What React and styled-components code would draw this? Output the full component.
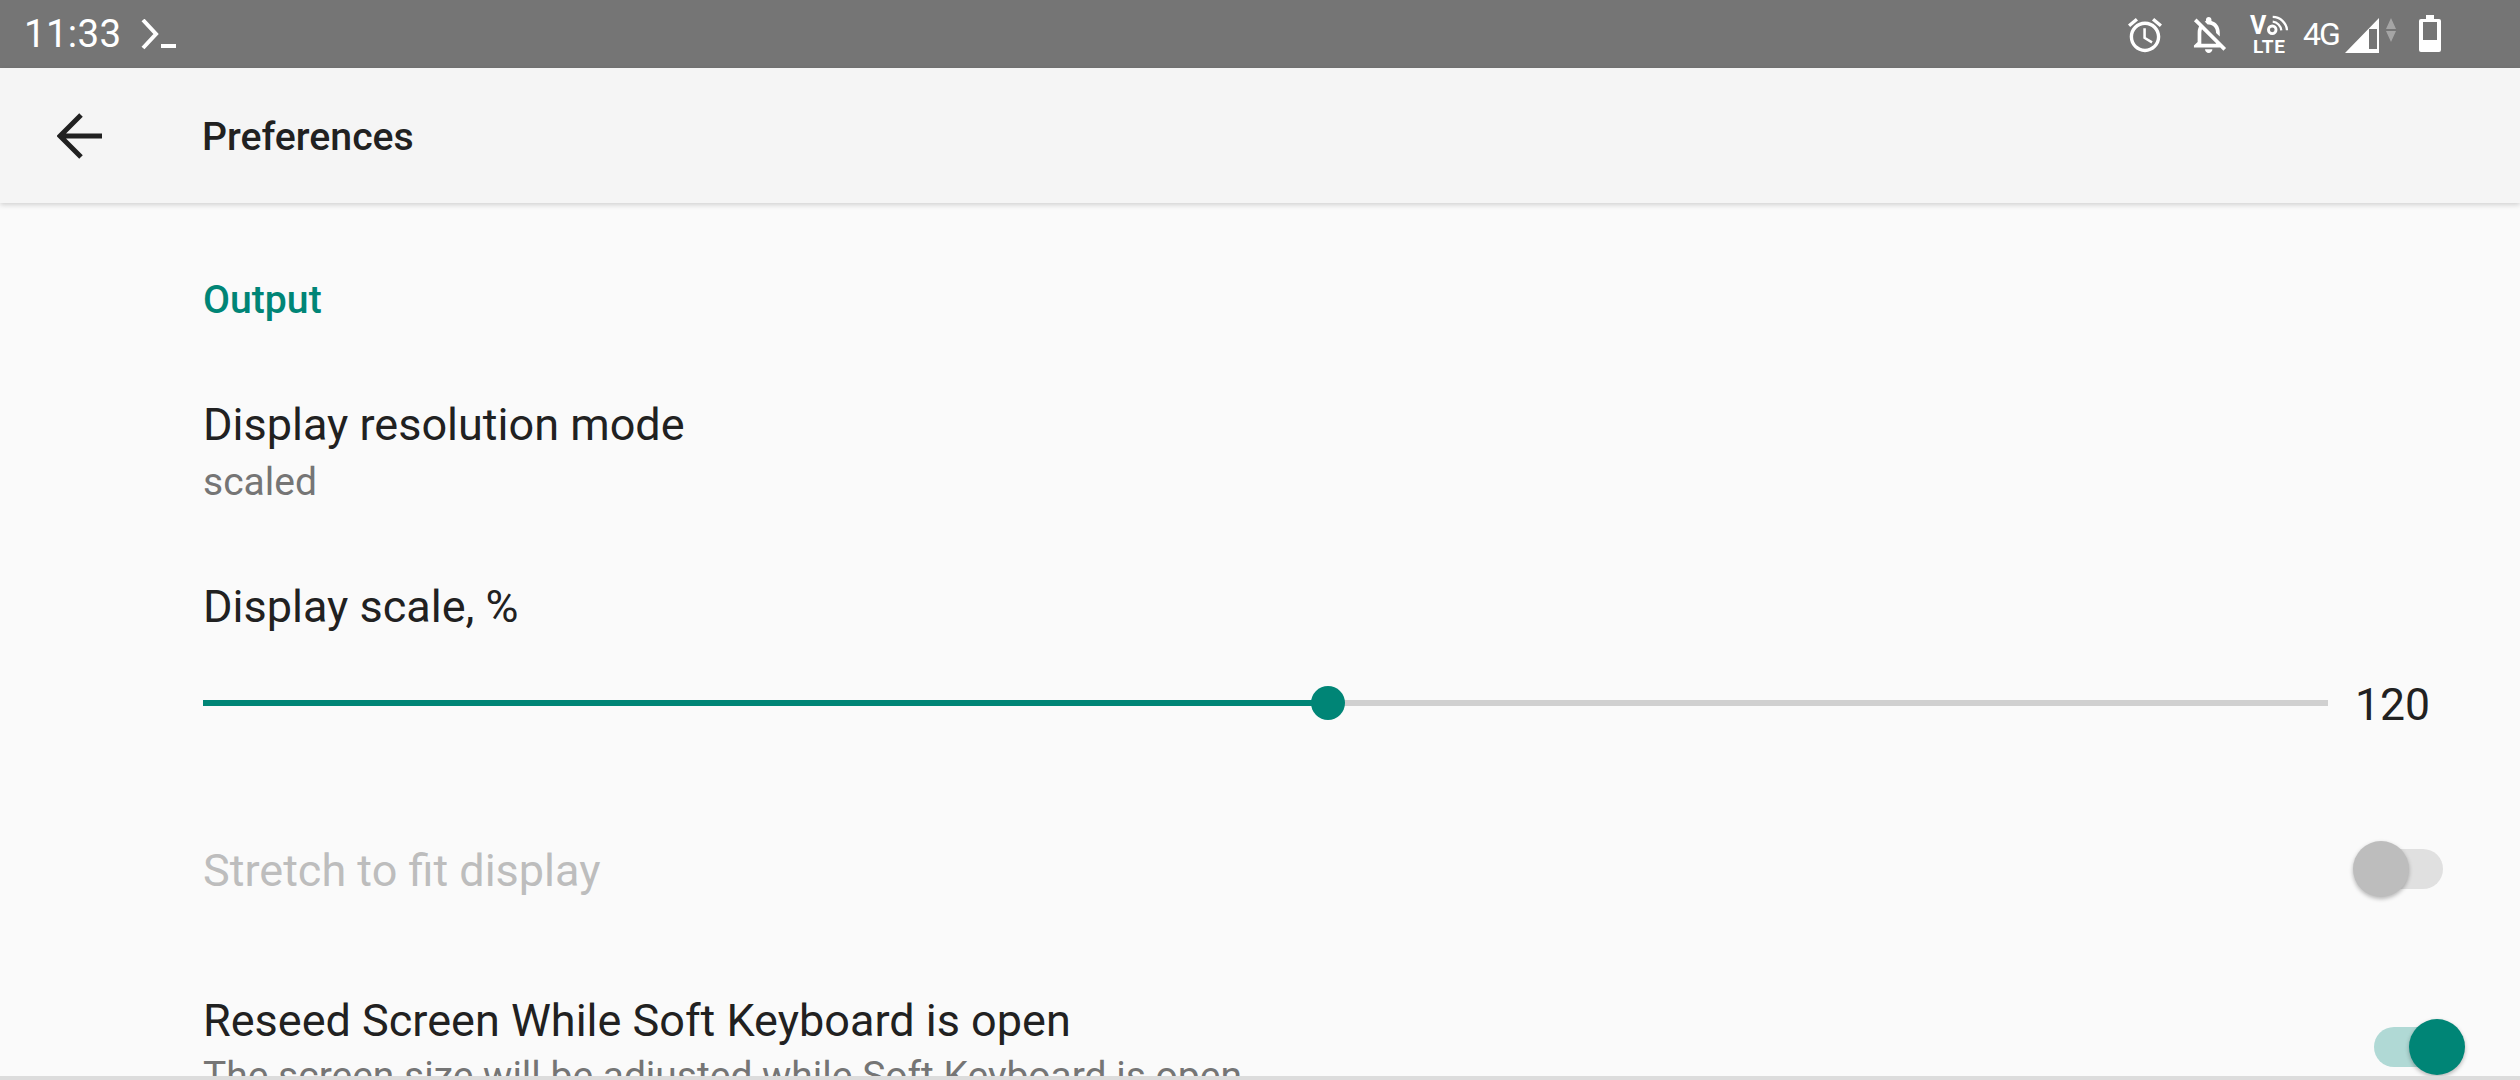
import React from 'react'
import styled, { createGlobalStyle } from 'styled-components'

const Global = createGlobalStyle`
  html, body {
    margin: 0;
    padding: 0;
    background: #fafafa;
  }
`

const TEAL = '#008576'

const Phone = styled.div`
  width: 2520px;
  height: 1080px;
  display: flex;
  flex-flow: column;
  overflow: hidden;
  background: #fafafa;
  font-family: Roboto, sans-serif;
  color: #212121;
`

const StatusBar = styled.div`
  flex: 0 0 68px;
  display: flex;
  align-items: center;
  padding: 0 79px 0 24px;
  background: #757575;
  color: #fff;
`

const Clock = styled.span`
  font-size: 38.5px;
  line-height: 68px;
  letter-spacing: 0.3px;
`

const Spacer = styled.div`
  flex: 1;
`

const StatusIcon = styled.svg`
  display: block;
  flex: none;
  margin-left: ${(p) => p.$left || 0}px;
  margin-top: ${(p) => p.$top || 0}px;
  fill: #fff;
  opacity: ${(p) => p.$opacity || 1};
`

const VoLte = styled.div`
  flex: none;
  width: 42px;
  margin-left: 21px;
  margin-top: 1px;
  display: flex;
  flex-flow: column;
  font-weight: 700;
`

const VoRow = styled.div`
  display: flex;
  height: 24px;
  margin-left: 2px;
`

const VoLetter = styled.span`
  font-size: 25px;
  line-height: 24px;
  width: 18px;
`

const LteLabel = styled.span`
  font-size: 19px;
  line-height: 18px;
  margin-left: 5px;
  letter-spacing: 0.6px;
`

const NetLabel = styled.span`
  flex: none;
  margin-left: 13px;
  font-size: 32px;
  line-height: 68px;
  letter-spacing: -2px;
  width: 36px;
`

const Toolbar = styled.header`
  flex: 0 0 135px;
  position: relative;
  z-index: 1;
  display: flex;
  align-items: center;
  padding-left: 57px;
  background: #f5f5f5;
  box-shadow: 0 2px 5px rgba(0, 0, 0, 0.16);
`

const BackIcon = styled.svg`
  display: block;
  flex: none;
  margin-right: 100px;
  stroke: #212121;
  fill: none;
`

const Title = styled.h1`
  margin: 3px 0 0;
  font-size: 39.2px;
  font-weight: 500;
  line-height: 50px;
  color: #212121;
`

const Content = styled.main`
  flex: 1;
  min-height: 0;
  overflow: hidden;
  padding: 0 0 0 203px;
`

const SectionTitle = styled.h2`
  margin: 0;
  padding-top: 72px;
  font-size: 39.2px;
  font-weight: 500;
  line-height: 50px;
  color: ${TEAL};
`

const Row = styled.div`
  display: flex;
  align-items: center;
  padding-top: ${(p) => p.$top}px;
`

const RowText = styled.div`
  flex: 1;
  min-width: 0;
`

const RowTitle = styled.div`
  font-size: 45px;
  line-height: 56px;
  color: ${(p) => (p.$disabled ? '#bdbdbd' : '#212121')};
`

const RowSummary = styled.div`
  margin-top: ${(p) => p.$gap}px;
  font-size: 39px;
  line-height: 50px;
  color: #757575;
`

const SliderRow = styled.div`
  display: flex;
  align-items: center;
  padding-right: 90px;
  margin-top: 38px;
`

const Track = styled.div`
  position: relative;
  flex: 1;
  height: 6px;
  background: #d0d0d0;
`

const TrackFill = styled.div`
  height: 100%;
  background: ${TEAL};
`

const Thumb = styled.div`
  position: absolute;
  top: 50%;
  width: 34px;
  height: 34px;
  border-radius: 50%;
  transform: translate(-50%, -50%);
  background: ${TEAL};
`

const SliderValue = styled.span`
  flex: none;
  margin: 4px 0 0 27px;
  font-size: 44.5px;
  line-height: 56px;
  color: #212121;
`

const Switch = styled.div`
  position: relative;
  flex: none;
  width: 88px;
  height: 40px;
  border-radius: 20px;
  margin-right: ${(p) => p.$right}px;
  margin-bottom: ${(p) => p.$lift}px;
  background: ${(p) => (p.$on ? '#b0d9d5' : '#e0e0e0')};
`

const SwitchKnob = styled.div`
  position: absolute;
  top: -8px;
  ${(p) => (p.$on ? 'right: -3px;' : 'left: -2px;')}
  width: 56px;
  height: 56px;
  border-radius: 50%;
  background: ${(p) => (p.$on ? TEAL : '#bdbdbd')};
  box-shadow: 0 2px 4px rgba(0, 0, 0, 0.28);
`

const BottomEdge = styled.div`
  flex: 0 0 4px;
  background: #dcdcdc;
`

const scale = 120
const scalePercent = ((scale - 50) / (182.2 - 50)) * 100

function StatusIcons() {
  return (
    <>
      {/* alarm */}
      <StatusIcon width="34" height="36" viewBox="2 1.8 20 20.2" $top="1">
        <path d="M22 5.72l-4.6-3.86-1.29 1.53 4.6 3.86L22 5.72zM7.88 3.39L6.6 1.86 2 5.71l1.29 1.53 4.59-3.85zM12.5 8H11v6l4.75 2.85.75-1.23-4-2.37V8zM12 4c-4.97 0-9 4.03-9 9s4.03 9 9 9 9-4.03 9-9-4.03-9-9-9zm0 16c-3.87 0-7-3.13-7-7s3.13-7 7-7 7 3.13 7 7-3.13 7-7 7z" />
      </StatusIcon>
      {/* muted bell */}
      <StatusIcon width="34" height="36" viewBox="4 2.5 17.4 19.5" $left="31" $top="2">
        <path d="M12 22c1.1 0 2-.9 2-2h-4c0 1.1.9 2 2 2zM12 6.5c2.49 0 4 2.02 4 4.5v.1l2 2V11c0-3.07-1.63-5.64-4.5-6.32V4c0-.83-.67-1.5-1.5-1.5s-1.5.67-1.5 1.5v.68c-.24.06-.47.15-.69.23l1.64 1.64c.18-.02.36-.05.55-.05zM5.41 3.35L4 4.76l2.81 2.81C6.29 8.57 6 9.74 6 11v5l-2 2v1h14.24l1.74 1.74 1.41-1.41L5.41 3.35zM16 17H8v-6c0-.68.12-1.32.34-1.9L16 16.76V17z" />
      </StatusIcon>
      <VoLte>
        <VoRow>
          <VoLetter>V</VoLetter>
          <svg width="24" height="24" viewBox="0 0 24 24" fill="none" stroke="#fff">
            <circle cx="5.5" cy="16" r="4" strokeWidth="3" />
            <path d="M6 7.5a10 10 0 0 1 9 9" strokeWidth="2.4" />
            <path d="M6 2.5a15 15 0 0 1 15 14" strokeWidth="2.4" />
          </svg>
        </VoRow>
        <LteLabel>LTE</LteLabel>
      </VoLte>
      <NetLabel>4G</NetLabel>
      {/* signal strength */}
      <StatusIcon width="34" height="35" viewBox="0 0 34 35" $left="6" $top="2">
        <path fillRule="evenodd" d="M0 35L34 0V35ZM24 11V31H32V11Z" />
      </StatusIcon>
      {/* data arrows */}
      <StatusIcon width="10" height="24" viewBox="0 0 10 24" $left="7" $top="-8" $opacity="0.35">
        <path d="M5 0L10 11H0ZM0 13H10L5 24Z" />
      </StatusIcon>
      {/* battery */}
      <StatusIcon width="22" height="37" viewBox="0 0 22 37" $left="23" $top="-2">
        <path fillRule="evenodd" d="M7 0H15V4H20A2 2 0 0 1 22 6V35A2 2 0 0 1 20 37H2A2 2 0 0 1 0 35V6A2 2 0 0 1 2 4H7ZM4 7V25H18V7Z" />
      </StatusIcon>
    </>
  )
}

function App() {
  return (
    <Phone>
      <Global />
      <StatusBar>
        <Clock>11:33</Clock>
        <StatusIcon width="38" height="32" viewBox="0 0 38 32" $left="19" $top="2">
          <path d="M3 1L16 15L3 29" fill="none" stroke="#fff" strokeWidth="4" />
          <path d="M21 25H36V29H21Z" />
        </StatusIcon>
        <Spacer />
        <StatusIcons />
      </StatusBar>
      <Toolbar>
        <BackIcon width="45" height="46" viewBox="0 0 45 46" strokeWidth="5">
          <path d="M45 23H4M24 2L3 23L24 44" />
        </BackIcon>
        <Title>Preferences</Title>
      </Toolbar>
      <Content>
        <SectionTitle>Output</SectionTitle>
        <Row $top="72">
          <RowText>
            <RowTitle>Display resolution mode</RowTitle>
            <RowSummary $gap="4">scaled</RowSummary>
          </RowText>
        </Row>
        <Row $top="72">
          <RowText>
            <RowTitle>Display scale, %</RowTitle>
            <SliderRow>
              <Track>
                <TrackFill style={{ width: `${scalePercent}%` }} />
                <Thumb style={{ left: `${scalePercent}%` }} />
              </Track>
              <SliderValue>120</SliderValue>
            </SliderRow>
          </RowText>
        </Row>
        <Row $top="110">
          <RowText>
            <RowTitle $disabled>Stretch to fit display</RowTitle>
          </RowText>
          <Switch $right="77" $lift="4">
            <SwitchKnob />
          </Switch>
        </Row>
        <Row $top="94">
          <RowText>
            <RowTitle>Reseed Screen While Soft Keyboard is open</RowTitle>
            <RowSummary $gap="2">The screen size will be adjusted while Soft Keyboard is open</RowSummary>
          </RowText>
          <Switch $on $right="58" $lift="0">
            <SwitchKnob $on />
          </Switch>
        </Row>
      </Content>
      <BottomEdge />
    </Phone>
  )
}

export default App
